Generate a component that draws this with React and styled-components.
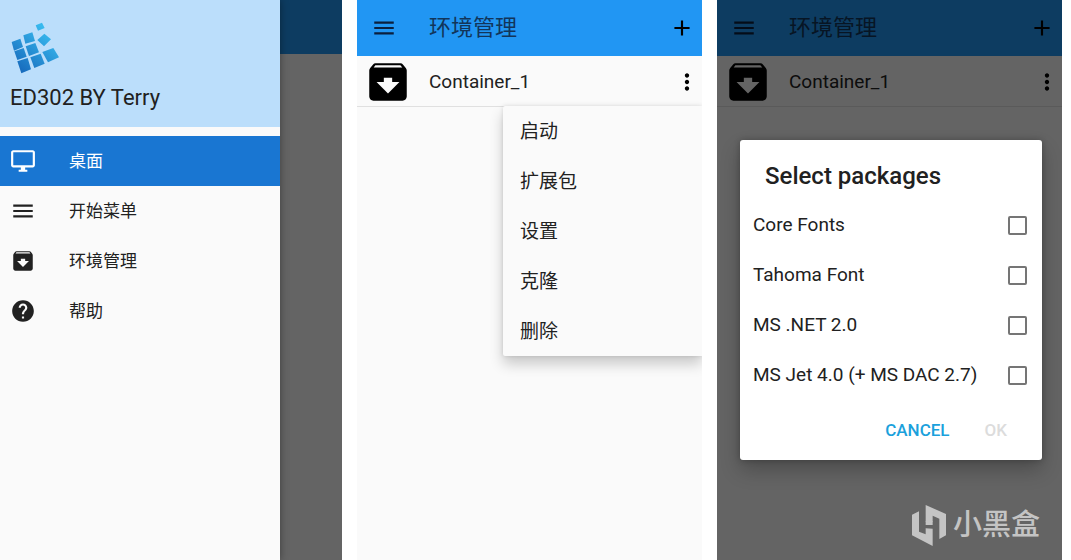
import React from "react";
import styled, { createGlobalStyle } from "styled-components";
import {
  MdAdd,
  MdArchive,
  MdHelp,
  MdMenu,
  MdMoreVert,
  MdOutlineDesktopWindows,
} from "react-icons/md";

const GlobalStyle = createGlobalStyle`
  *, *::before, *::after {
    box-sizing: border-box;
  }

  body {
    margin: 0;
    background-color: #ffffff;
    color: #212121;
    font-family: Roboto, "Noto Sans CJK SC", sans-serif;
  }

  button {
    padding: 0;
    border: none;
    background: none;
    color: inherit;
    font: inherit;
    cursor: pointer;
  }
`;

const Page = styled.main`
  display: grid;
  grid-template-columns: 342fr 345fr 345fr;
  gap: 15px;
  min-height: 100vh;
  padding-right: 9px;
`;

const Screen = styled.section`
  position: relative;
  overflow: hidden;
  background-color: #fafafa;
`;

const AppBar = styled.header`
  display: flex;
  align-items: center;
  gap: 32px;
  height: ${(props) => props.$height || "56px"};
  padding: 0 7px 0 14px;
  background-color: #2196f3;
`;

const AppTitle = styled.h1`
  flex: 1;
  margin: 0;
  font-size: 22px;
  font-weight: 400;
  line-height: 28px;
  color: #12355a;
`;

const IconButton = styled.button`
  display: flex;
  color: ${(props) => props.$color || "#000000"};
  font-size: 26px;
`;

const ContainerRow = styled.div`
  display: flex;
  align-items: center;
  height: 51px;
  padding: 2px 2px 0 6px;
  border-bottom: 1px solid #e0e0e0;
`;

const ContainerIcon = styled(MdArchive)`
  flex: none;
  font-size: 50px;
  color: #000000;
`;

const ContainerName = styled.span`
  flex: 1;
  padding-left: 16px;
  font-size: 19px;
  line-height: 28px;
`;

const Scrim = styled.div`
  position: absolute;
  inset: 0;
  background-color: rgba(0, 0, 0, 0.6);
`;

const DialogScrim = styled(Scrim)`
  display: grid;
  align-items: center;
  padding: 40px 20px 0 23px;
`;

/* Navigation drawer */

const Drawer = styled.aside`
  position: absolute;
  inset: 0 auto 0 0;
  width: 280px;
  background-color: #fafafa;
  box-shadow: 0 0 8px rgba(0, 0, 0, 0.4);
`;

const DrawerHeader = styled.div`
  display: flex;
  flex-direction: column;
  gap: 8px;
  height: 127px;
  padding: 22px 10px 0;
  background-color: #bbdefb;
`;

const DrawerTitle = styled.span`
  font-size: 22px;
  line-height: 32px;
`;

const DrawerNav = styled.nav`
  display: flex;
  flex-direction: column;
  padding-top: 9px;
`;

const DrawerLink = styled.a`
  display: flex;
  align-items: center;
  gap: 33px;
  height: 50px;
  padding: 0 10px;
  background-color: ${(props) => (props.$active ? "#1976d2" : "transparent")};
  color: ${(props) => (props.$active ? "#ffffff" : "#212121")};
  font-size: 17px;
  line-height: 24px;
  text-decoration: none;

  svg {
    font-size: 26px;
  }
`;

/* Popup menu */

const PopupMenu = styled.div`
  position: absolute;
  top: 106px;
  right: 0;
  display: flex;
  flex-direction: column;
  width: 199px;
  background-color: #fafafa;
  border-radius: 2px 0 0 2px;
  box-shadow: 0 8px 14px rgba(0, 0, 0, 0.2), 0 0 4px rgba(0, 0, 0, 0.12);
`;

const PopupItem = styled.button`
  height: 50px;
  padding: 2px 17px 0;
  font-size: 19px;
  line-height: 28px;
  text-align: left;
`;

/* Package dialog */

const Dialog = styled.div`
  background-color: #ffffff;
  border-radius: 3px;
  box-shadow: 0 10px 20px rgba(0, 0, 0, 0.24), 0 0 6px rgba(0, 0, 0, 0.24);
`;

const DialogTitle = styled.h2`
  margin: 0;
  padding: 20px 25px 8px;
  font-size: 24px;
  font-weight: 500;
  line-height: 32px;
`;

const PackageRow = styled.label`
  display: flex;
  align-items: center;
  justify-content: space-between;
  height: 50px;
  padding: 0 15px 0 13px;
  font-size: 19px;
  line-height: 28px;
`;

const Checkbox = styled.input`
  appearance: none;
  width: 19px;
  height: 19px;
  margin: 0;
  border: 2px solid #757575;
  border-radius: 2px;

  &:checked {
    background-color: #039bd8;
    border-color: #039bd8;
  }
`;

const DialogActions = styled.div`
  display: flex;
  justify-content: flex-end;
  gap: 35px;
  padding: 18px 35px;
`;

const DialogButton = styled.button`
  color: #1ba1dc;
  font-size: 17px;
  font-weight: 500;
  line-height: 24px;

  &:disabled {
    color: #dcdcdc;
    cursor: default;
  }
`;

const Watermark = styled.div`
  position: absolute;
  right: 22px;
  bottom: 14px;
  display: flex;
  align-items: center;
  gap: 7px;
  color: #c4c4c4;
  font-size: 29px;
  font-weight: 500;
  line-height: 42px;
`;

const navItems = [
  { label: "桌面", icon: MdOutlineDesktopWindows, active: true },
  { label: "开始菜单", icon: MdMenu },
  { label: "环境管理", icon: MdArchive },
  { label: "帮助", icon: MdHelp },
];

const menuItems = ["启动", "扩展包", "设置", "克隆", "删除"];

const packages = [
  "Core Fonts",
  "Tahoma Font",
  "MS .NET 2.0",
  "MS Jet 4.0 (+ MS DAC 2.7)",
];

const DrawerLogo = () => (
  <svg width="50" height="52" viewBox="30 66 150 156" aria-hidden="true">
    <defs>
      <linearGradient
        id="tiles"
        gradientUnits="userSpaceOnUse"
        x1="50"
        y1="205"
        x2="140"
        y2="90"
      >
        <stop offset="0" stopColor="#176bbd" />
        <stop offset="1" stopColor="#38b9ee" />
      </linearGradient>
    </defs>
    <g fill="url(#tiles)">
      <path d="M107 76l19-8 8 16-20 8z" />
      <path d="M70 106l27-9 8 26-29 8z" />
      <path d="M112 120l21-19 20 17-21 21z" />
      <path d="M35 126l26-10 8 25-27 11z" />
      <path d="M43 154l28-10 9 26-28 10z" />
      <path d="M77 139l29-10 11 28-30 11z" />
      <path d="M52 184l31-10 10 34-29 12z" />
      <path d="M91 172l31-11 12 30-31 13z" />
      <path d="M127 156l33-12 17 28-33 15z" />
    </g>
  </svg>
);

const WatermarkLogo = () => (
  <svg
    width="34"
    height="41"
    viewBox="63 72 102 123"
    fill="currentColor"
    aria-hidden="true"
  >
    <path d="M63 101l21-10v61l20 8v-18l21 1v52l-62-32z" />
    <path d="M104 72l61 27v64l-20 11v-61l-20-9v19h-21z" />
    <path d="M104 121h21v11h-21z" />
  </svg>
);

const EnvironmentList = ({ children }) => (
  <Screen>
    <AppBar>
      <IconButton aria-label="Menu" $color="#0b1f3d">
        <MdMenu />
      </IconButton>
      <AppTitle>环境管理</AppTitle>
      <IconButton aria-label="Add">
        <MdAdd />
      </IconButton>
    </AppBar>
    <ContainerRow>
      <ContainerIcon />
      <ContainerName>Container_1</ContainerName>
      <IconButton aria-label="More">
        <MdMoreVert />
      </IconButton>
    </ContainerRow>
    {children}
  </Screen>
);

const DrawerScreen = () => (
  <Screen>
    <AppBar $height="54px" />
    <Scrim />
    <Drawer>
      <DrawerHeader>
        <DrawerLogo />
        <DrawerTitle>ED302 BY Terry</DrawerTitle>
      </DrawerHeader>
      <DrawerNav>
        {navItems.map(({ label, icon: Icon, active }) => (
          <DrawerLink key={label} href="#" $active={active}>
            <Icon />
            {label}
          </DrawerLink>
        ))}
      </DrawerNav>
    </Drawer>
  </Screen>
);

const App = () => {
  return (
    <>
      <GlobalStyle />
      <Page>
        <DrawerScreen />
        <EnvironmentList>
          <PopupMenu role="menu">
            {menuItems.map((item) => (
              <PopupItem key={item} role="menuitem">
                {item}
              </PopupItem>
            ))}
          </PopupMenu>
        </EnvironmentList>
        <EnvironmentList>
          <DialogScrim>
            <Dialog role="dialog" aria-labelledby="packages-title">
              <DialogTitle id="packages-title">Select packages</DialogTitle>
              {packages.map((name) => (
                <PackageRow key={name}>
                  {name}
                  <Checkbox type="checkbox" />
                </PackageRow>
              ))}
              <DialogActions>
                <DialogButton>CANCEL</DialogButton>
                <DialogButton disabled>OK</DialogButton>
              </DialogActions>
            </Dialog>
          </DialogScrim>
          <Watermark>
            <WatermarkLogo />
            小黑盒
          </Watermark>
        </EnvironmentList>
      </Page>
    </>
  );
};

export default App;
